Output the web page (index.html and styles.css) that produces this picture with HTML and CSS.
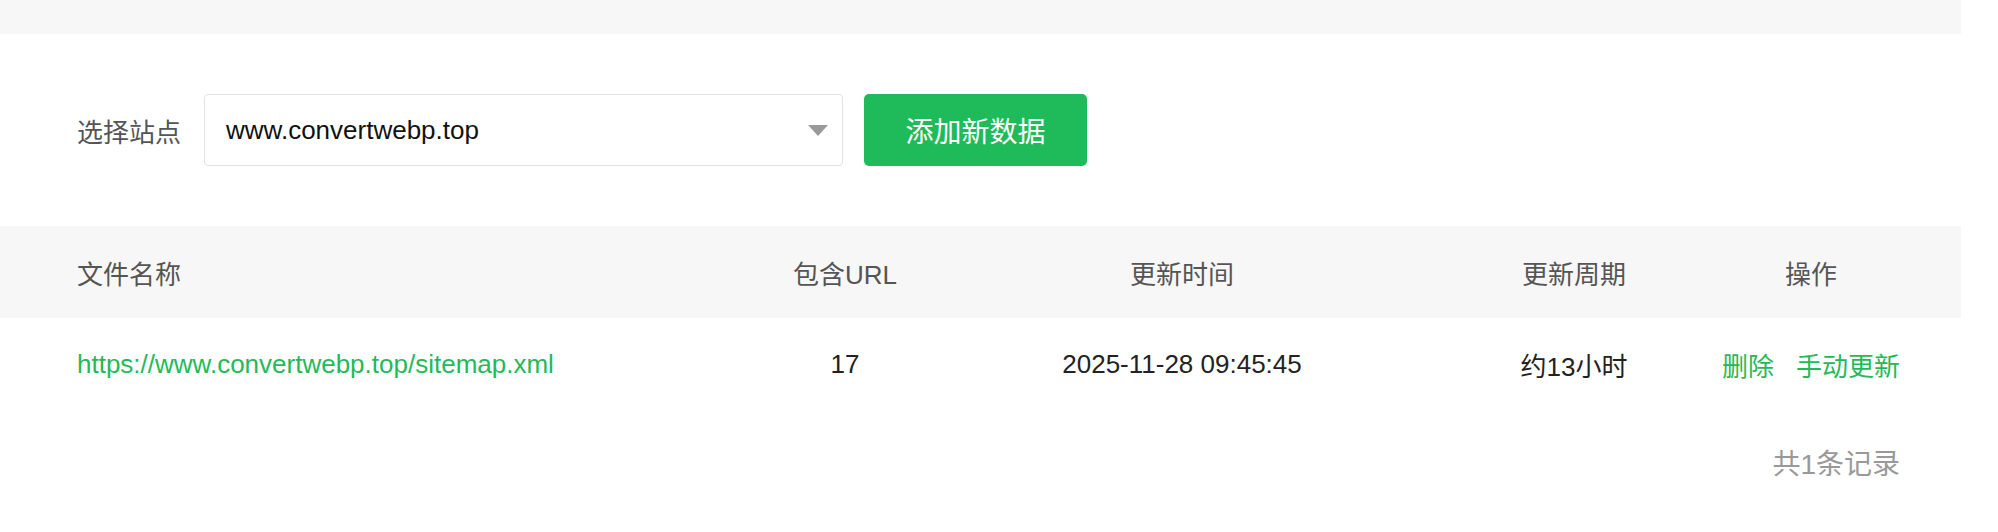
FILE: index.html
```html
<!DOCTYPE html>
<html lang="zh-CN">
<head>
<meta charset="utf-8">
<title>Sitemap</title>
<link rel="stylesheet" href="styles.css">
</head>
<body>
<div class="page">
  <div class="topbar"></div>

  <div class="toolbar">
    <span class="toolbar-label">选择站点</span>
    <div class="select">
      <span class="select-value">www.convertwebp.top</span>
      <svg class="select-arrow" width="20" height="11" viewBox="0 0 20 11"><polygon points="0,0 20,0 10,11" fill="#999"/></svg>
    </div>
    <button class="btn-primary" type="button">添加新数据</button>
  </div>

  <div class="table">
    <div class="table-row table-head">
      <div class="cell cell-name">文件名称</div>
      <div class="cell">包含URL</div>
      <div class="cell">更新时间</div>
      <div class="cell">更新周期</div>
      <div class="cell">操作</div>
    </div>
    <div class="table-row table-body">
      <div class="cell cell-name"><a class="link" href="#">https://www.convertwebp.top/sitemap.xml</a></div>
      <div class="cell">17</div>
      <div class="cell">2025-11-28 09:45:45</div>
      <div class="cell">约13小时</div>
      <div class="cell cell-actions"><a class="link" href="#">删除</a><a class="link" href="#">手动更新</a></div>
    </div>
  </div>

  <div class="pager">共1条记录</div>
</div>
</body>
</html>
```

FILE: styles.css
```css
* { box-sizing: border-box; }

html, body {
  margin: 0;
  padding: 0;
  background: #fff;
}

body {
  font-family: "Liberation Sans", Arial, "Noto Sans CJK SC", sans-serif;
  color: #222;
}

.page {
  width: 1961px;
}

.topbar {
  height: 34px;
  background: #f7f7f7;
}

.toolbar {
  display: flex;
  align-items: center;
  margin-top: 60px;
  padding-left: 77px;
  height: 72px;
}

.toolbar-label {
  font-size: 26px;
  color: #555;
  margin-right: 23px;
  white-space: nowrap;
}

.select {
  width: 639px;
  height: 72px;
  border: 1px solid #e2e2e2;
  border-radius: 4px;
  display: flex;
  align-items: center;
  justify-content: space-between;
  padding: 0 14px 0 21px;
  background: #fff;
}

.select-value {
  font-size: 26px;
  color: #111;
}

.select-arrow {
  display: block;
}

.btn-primary {
  margin-left: 21px;
  width: 223px;
  height: 72px;
  border: none;
  border-radius: 5px;
  background: #1fba59;
  color: #fff;
  font-family: inherit;
  font-size: 28px;
  padding: 0;
  cursor: pointer;
}

.table {
  margin-top: 60px;
}

.table-row {
  display: grid;
  grid-template-columns: 760px 170px 504px 280px 194px;
  padding-right: 53px;
  height: 92px;
  align-items: center;
  font-size: 26px;
}

.table-head {
  background: #f7f7f7;
  color: #555;
}

.table-body {
  color: #222;
}

.cell {
  text-align: center;
  white-space: nowrap;
}

.cell-name {
  text-align: left;
  padding-left: 77px;
}

.link {
  color: #1fba59;
  text-decoration: none;
}

.cell-actions {
  display: flex;
  justify-content: center;
  gap: 22px;
}

.pager {
  margin-top: 35px;
  height: 40px;
  line-height: 40px;
  text-align: right;
  padding-right: 61px;
  font-size: 28px;
  color: #999;
}
```
